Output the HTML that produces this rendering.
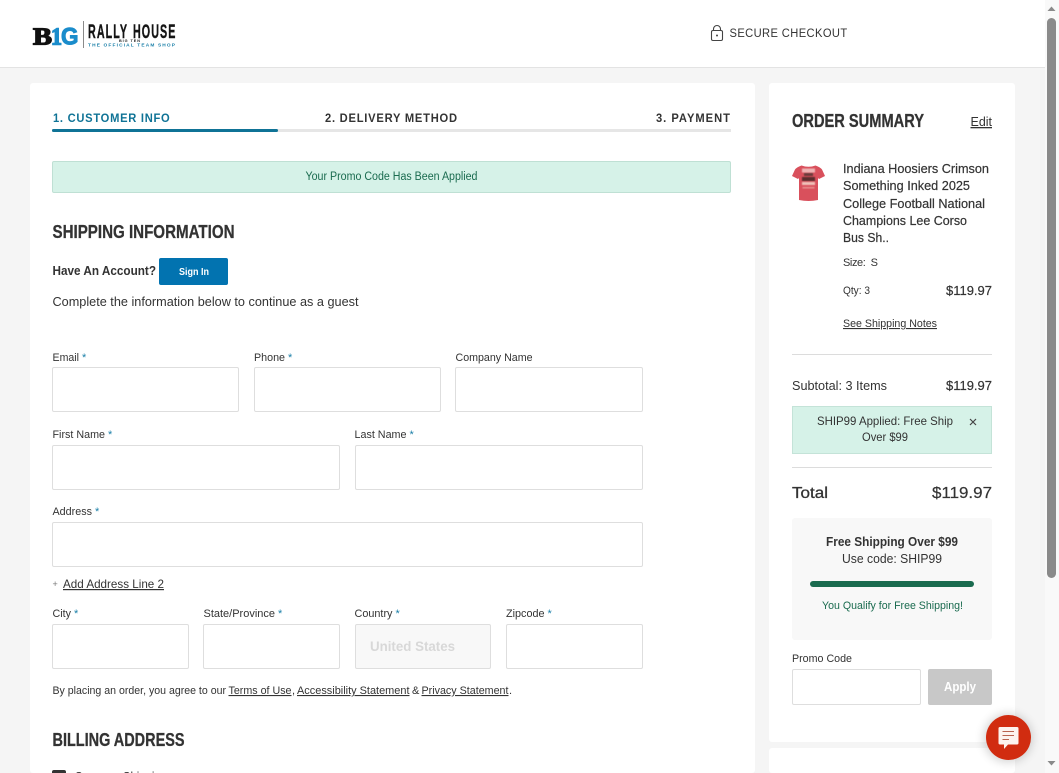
<!DOCTYPE html>
<html lang="en">
<head>
<meta charset="utf-8">
<title>Secure Checkout</title>
<style>
html,body{margin:0;padding:0;width:1059px;height:773px;overflow:hidden;background:#f5f5f5;font-family:"Liberation Sans",sans-serif}
#wrap{position:relative;width:1059px;height:773px;overflow:hidden;background:#f5f5f5}
.b{position:absolute;box-sizing:border-box}
.in{position:absolute;box-sizing:border-box;background:#fff;border:1px solid #dedede;border-radius:2px}
svg.layer{position:absolute;left:0;top:0;overflow:hidden}
svg text{font-family:"Liberation Sans",sans-serif;fill:#333}
.n{font-family:"Liberation Sans Narrow","Liberation Sans",sans-serif!important;font-weight:700;stroke:#333;stroke-width:.3}
</style>
</head>
<body>
<div id="wrap">
<div class="b" style="left:0;top:0;width:1045px;height:68px;background:#fff;border-bottom:1px solid #e3e3e3"></div>
<div class="b" style="left:1045px;top:0;width:14px;height:773px;background:#f9f9f9"></div>
<div class="b" style="left:1047px;top:18px;width:9px;height:560px;background:#8a8a8a;border-radius:5px"></div>
<div class="b" style="left:30px;top:83px;width:725px;height:690px;background:#fff;border-radius:3px"></div>
<div class="b" style="left:769px;top:83px;width:246px;height:659px;background:#fff;border-radius:3px"></div>
<div class="b" style="left:769px;top:748px;width:246px;height:25px;background:#fff;border-radius:3px"></div>

<div class="b" style="left:52px;top:129px;width:679px;height:3px;background:#e6e6e6"></div>
<div class="b" style="left:52px;top:129px;width:226px;height:3px;background:#0f7396;border-radius:2px"></div>
<div class="b" style="left:52px;top:161px;width:679px;height:32px;background:#d6f2e8;border:1px solid #bfe0d4;border-radius:2px"></div>
<div class="b" style="left:159px;top:258px;width:69px;height:27px;background:#0273b0;border-radius:2px"></div>

<div class="in" style="left:52px;top:367px;width:187px;height:45px"></div>
<div class="in" style="left:254px;top:367px;width:187px;height:45px"></div>
<div class="in" style="left:455px;top:367px;width:188px;height:45px"></div>
<div class="in" style="left:52px;top:445px;width:288px;height:45px"></div>
<div class="in" style="left:355px;top:445px;width:288px;height:45px"></div>
<div class="in" style="left:52px;top:522px;width:591px;height:45px"></div>
<div class="in" style="left:52px;top:624px;width:137px;height:45px"></div>
<div class="in" style="left:203px;top:624px;width:137px;height:45px"></div>
<div class="in" style="left:355px;top:624px;width:136px;height:45px;background:#f8f8f8"></div>
<div class="in" style="left:506px;top:624px;width:137px;height:45px"></div>
<div class="b" style="left:52px;top:770px;width:14px;height:14px;background:#333;border-radius:2px"></div>

<div class="b" style="left:792px;top:354px;width:200px;height:1px;background:#dcdcdc"></div>
<div class="b" style="left:792px;top:406px;width:200px;height:48px;background:#d6f2e8;border:1px solid #c4e3d8"></div>
<div class="b" style="left:792px;top:467px;width:200px;height:1px;background:#dcdcdc"></div>
<div class="b" style="left:792px;top:518px;width:200px;height:122px;background:#f8f8f8;border-radius:3px"></div>
<div class="b" style="left:810px;top:581px;width:164px;height:6px;background:#1a6b4f;border-radius:3px"></div>
<div class="in" style="left:792px;top:669px;width:129px;height:36px"></div>
<div class="b" style="left:928px;top:669px;width:64px;height:36px;background:#c8c8c8;border-radius:2px"></div>

<svg class="layer" width="1059" height="773" viewBox="0 0 1059 773" xmlns="http://www.w3.org/2000/svg">
  <!-- scrollbar arrows -->
  <path d="M1047.5 11 L1051.5 6.5 L1055.5 11Z" fill="#8a8a8a"/>
  <path d="M1047.5 761 L1051.5 765.5 L1055.5 761Z" fill="#8a8a8a"/>

  <!-- logo -->
  <text x="33" y="44.500" font-size="24" font-weight="700" textLength="19" lengthAdjust="spacingAndGlyphs" style="font-family:'Liberation Serif',serif;fill:#111;stroke:#111;stroke-width:1.300">B</text>
  <text x="51" y="44.500" font-size="24" font-weight="700" textLength="11" lengthAdjust="spacingAndGlyphs" style="font-family:'Liberation Serif',serif;fill:#1a8ccb;stroke:#1a8ccb;stroke-width:1.400">1</text>
  <text x="61" y="44.500" font-size="24" font-weight="700" textLength="17.500" lengthAdjust="spacingAndGlyphs" style="fill:#1a8ccb;stroke:#1a8ccb;stroke-width:1">G</text>
  <rect x="83" y="21" width="1" height="27" fill="#8a8a8a"/>
  <g transform="translate(88,38) scale(.55,1)">
    <text x="0" y="0" font-size="19.500" font-weight="700" textLength="71" style="font-family:'Liberation Sans Narrow','Liberation Sans',sans-serif;fill:#151515;stroke:#151515;stroke-width:.4">RALLY</text>
  </g>
  <g transform="translate(133,38) scale(.55,1)">
    <text x="0" y="0" font-size="19.500" font-weight="700" textLength="77" style="font-family:'Liberation Sans Narrow','Liberation Sans',sans-serif;fill:#151515;stroke:#151515;stroke-width:.4">HOUSE</text>
  </g>
  <text x="119" y="41.800" font-size="3.800" font-weight="700" textLength="21" style="fill:#222">BIG TEN</text>
  <text x="88" y="46.500" font-size="4.800" font-weight="700" textLength="87" style="fill:#1a7fa8">THE OFFICIAL TEAM SHOP</text>

  <!-- secure -->
  <g fill="none" stroke="#444" stroke-width="1.100">
    <rect x="711.500" y="30.500" width="11" height="10" rx="1.500"/>
    <path d="M713.500 30.500 V29 a3.500 3.500 0 0 1 7 0 V30.500"/>
  </g>
  <circle cx="717" cy="35.500" r="1" fill="#444"/>
  <g transform="translate(729.500,37) scale(.93,1)"><text x="0" y="0" font-size="12" textLength="126.500">SECURE CHECKOUT</text></g>

  <!-- steps -->
  <g transform="translate(53,122) scale(.93,1)"><text x="0" y="0" font-size="12" font-weight="700" textLength="125.500" style="fill:#0f7396">1. CUSTOMER INFO</text></g>
  <g transform="translate(325,122) scale(.93,1)"><text x="0" y="0" font-size="12" font-weight="700" textLength="142">2. DELIVERY METHOD</text></g>
  <g transform="translate(656,122) scale(.93,1)"><text x="0" y="0" font-size="12" font-weight="700" textLength="79.500">3. PAYMENT</text></g>
  <text x="305.500" y="180" font-size="11.500" textLength="172" lengthAdjust="spacingAndGlyphs" style="fill:#1a6b4f">Your Promo Code Has Been Applied</text>

  <!-- shipping -->
  <text x="52.500" y="238" font-size="18" class="n" textLength="182" lengthAdjust="spacingAndGlyphs">SHIPPING INFORMATION</text>
  <text x="52.500" y="275" font-size="12.500" font-weight="700" textLength="103.500" lengthAdjust="spacingAndGlyphs">Have An Account?</text>
  <text x="179" y="275" font-size="10" font-weight="700" textLength="30" lengthAdjust="spacingAndGlyphs" style="fill:#fff">Sign In</text>
  <text x="52.500" y="306" font-size="13" textLength="306" lengthAdjust="spacingAndGlyphs">Complete the information below to continue as a guest</text>

  <g font-size="11">
    <text x="52.500" y="361" textLength="26.500" lengthAdjust="spacingAndGlyphs">Email</text><text x="82" y="361" style="fill:#1a7fa8">*</text>
    <text x="254" y="361" textLength="31" lengthAdjust="spacingAndGlyphs">Phone</text><text x="288" y="361" style="fill:#1a7fa8">*</text>
    <text x="455.500" y="361" textLength="77" lengthAdjust="spacingAndGlyphs">Company Name</text>
    <text x="52.500" y="438" textLength="52.500" lengthAdjust="spacingAndGlyphs">First Name</text><text x="108" y="438" style="fill:#1a7fa8">*</text>
    <text x="354.500" y="438" textLength="52" lengthAdjust="spacingAndGlyphs">Last Name</text><text x="409.500" y="438" style="fill:#1a7fa8">*</text>
    <text x="52.500" y="515" textLength="39.500" lengthAdjust="spacingAndGlyphs">Address</text><text x="95" y="515" style="fill:#1a7fa8">*</text>
    <text x="52.500" y="617" textLength="18.500" lengthAdjust="spacingAndGlyphs">City</text><text x="74" y="617" style="fill:#1a7fa8">*</text>
    <text x="203.500" y="617" textLength="71.500" lengthAdjust="spacingAndGlyphs">State/Province</text><text x="278" y="617" style="fill:#1a7fa8">*</text>
    <text x="354.500" y="617" textLength="38" lengthAdjust="spacingAndGlyphs">Country</text><text x="395.500" y="617" style="fill:#1a7fa8">*</text>
    <text x="506" y="617" textLength="38.500" lengthAdjust="spacingAndGlyphs">Zipcode</text><text x="547.500" y="617" style="fill:#1a7fa8">*</text>
  </g>

  <text x="52.500" y="587" font-size="9" style="fill:#777">+</text>
  <text x="63" y="588" font-size="12" textLength="101" lengthAdjust="spacingAndGlyphs" text-decoration="underline">Add Address Line 2</text>
  <text x="370" y="651" font-size="14" font-weight="700" textLength="85" lengthAdjust="spacingAndGlyphs" style="fill:#d8d8d8">United States</text>

  <g font-size="11">
    <text x="52.500" y="694" textLength="173.500" lengthAdjust="spacingAndGlyphs">By placing an order, you agree to our</text>
    <text x="228.500" y="694" textLength="63" lengthAdjust="spacingAndGlyphs" text-decoration="underline">Terms of Use</text>
    <text x="292" y="694">,</text>
    <text x="297" y="694" textLength="112.500" lengthAdjust="spacingAndGlyphs" text-decoration="underline">Accessibility Statement</text>
    <text x="412" y="694">&amp;</text>
    <text x="421.500" y="694" textLength="87" lengthAdjust="spacingAndGlyphs" text-decoration="underline">Privacy Statement</text>
    <text x="509" y="694">.</text>
  </g>

  <text x="52.500" y="746" font-size="18" class="n" textLength="132" lengthAdjust="spacingAndGlyphs">BILLING ADDRESS</text>
  <text x="75" y="781" font-size="12.500" textLength="92" lengthAdjust="spacingAndGlyphs">Same as Shipping</text>

  <!-- summary -->
  <text x="792" y="127" font-size="18" class="n" textLength="132" lengthAdjust="spacingAndGlyphs">ORDER SUMMARY</text>
  <text x="970.500" y="126" font-size="13" textLength="21.500" lengthAdjust="spacingAndGlyphs" text-decoration="underline">Edit</text>

  <!-- tee -->
  <defs><filter id="t" x="-10%" y="-10%" width="120%" height="120%"><feGaussianBlur stdDeviation=".45"/></filter></defs>
  <path d="M801.500 165.500 Q808.500 168 815.500 165.500 Q820 167 822 169.500 L825 176 L819 179 L818 178 L818 200 Q808.500 202 799 200 L799 178 L798 179 L792 176 L795 169.500 Q797 167 801.500 165.500 Z" fill="#d9505c"/>
  <g filter="url(#t)">
    <rect x="802" y="168.500" width="13" height="4" fill="#eeb4b4"/>
    <rect x="804" y="173" width="9" height="3" fill="#6a3a3a"/>
    <rect x="802" y="177" width="13" height="4" fill="#5a2d2d"/>
    <rect x="802" y="182" width="13" height="3" fill="#efc0b8"/>
    <rect x="802.500" y="187" width="12" height="1.500" fill="#e89090"/>
  </g>

  <g font-size="13" style="paint-order:stroke" stroke="#333" stroke-width=".2">
    <text x="843" y="173" textLength="146" lengthAdjust="spacingAndGlyphs">Indiana Hoosiers Crimson</text>
    <text x="843" y="190" textLength="127" lengthAdjust="spacingAndGlyphs">Something Inked 2025</text>
    <text x="843" y="208" textLength="142" lengthAdjust="spacingAndGlyphs">College Football National</text>
    <text x="843" y="225" textLength="124" lengthAdjust="spacingAndGlyphs">Champions Lee Corso</text>
    <text x="843" y="242" textLength="46" lengthAdjust="spacingAndGlyphs">Bus Sh..</text>
  </g>
  <text x="843" y="266" font-size="11" textLength="35" xml:space="preserve">Size:  S</text>
  <text x="843" y="294" font-size="11" textLength="27" lengthAdjust="spacingAndGlyphs">Qty: 3</text>
  <text x="946" y="295" font-size="13" textLength="46" lengthAdjust="spacingAndGlyphs" stroke="#333" stroke-width=".2">$119.97</text>
  <text x="843" y="327" font-size="11" textLength="94" lengthAdjust="spacingAndGlyphs" text-decoration="underline">See Shipping Notes</text>

  <text x="792" y="390" font-size="13" textLength="95" lengthAdjust="spacingAndGlyphs">Subtotal: 3 Items</text>
  <text x="946" y="390" font-size="13" textLength="46" lengthAdjust="spacingAndGlyphs" stroke="#333" stroke-width=".2">$119.97</text>

  <text x="817" y="425" font-size="12" textLength="136" lengthAdjust="spacingAndGlyphs">SHIP99 Applied: Free Ship</text>
  <text x="862" y="441" font-size="12" textLength="46" lengthAdjust="spacingAndGlyphs">Over $99</text>
  <path d="M970 419 L976 425 M976 419 L970 425" stroke="#444" stroke-width="1.200" fill="none"/>

  <text x="792" y="498" font-size="16" textLength="36" lengthAdjust="spacingAndGlyphs" stroke="#333" stroke-width=".3">Total</text>
  <text x="932" y="498" font-size="16" textLength="60" lengthAdjust="spacingAndGlyphs" stroke="#333" stroke-width=".2">$119.97</text>

  <text x="826" y="546" font-size="12.500" font-weight="700" textLength="132" lengthAdjust="spacingAndGlyphs">Free Shipping Over $99</text>
  <text x="842" y="563" font-size="13" textLength="100" lengthAdjust="spacingAndGlyphs">Use code: SHIP99</text>
  <text x="822" y="609" font-size="11" textLength="141" lengthAdjust="spacingAndGlyphs" style="fill:#1a6b4f">You Qualify for Free Shipping!</text>

  <text x="792" y="662" font-size="11" textLength="60" lengthAdjust="spacingAndGlyphs">Promo Code</text>
  <text x="944" y="691" font-size="13" font-weight="700" textLength="32" lengthAdjust="spacingAndGlyphs" style="fill:#fff">Apply</text>

  <!-- chat -->
  <defs><filter id="s" x="-40%" y="-40%" width="180%" height="180%"><feGaussianBlur stdDeviation="5"/></filter></defs>
  <circle cx="1008" cy="738" r="24" fill="#000" opacity=".18" filter="url(#s)"/>
  <circle cx="1008.500" cy="737.500" r="22.500" fill="#d12c10"/>
  <path d="M1000 727 H1017 a1.500 1.500 0 0 1 1.500 1.500 V743 a1.500 1.500 0 0 1 -1.500 1.500 H1008 L1004 749 V744.500 H1000 a1.500 1.500 0 0 1 -1.500 -1.500 V728.500 a1.500 1.500 0 0 1 1.500 -1.500Z" fill="#fdf3ee"/>
  <path d="M1002.500 731.500 H1014 M1002.500 735.500 H1014 M1002.500 739.500 H1009" stroke="#b9634e" stroke-width="1.100" fill="none"/>
</svg>
</div>
</body>
</html>
